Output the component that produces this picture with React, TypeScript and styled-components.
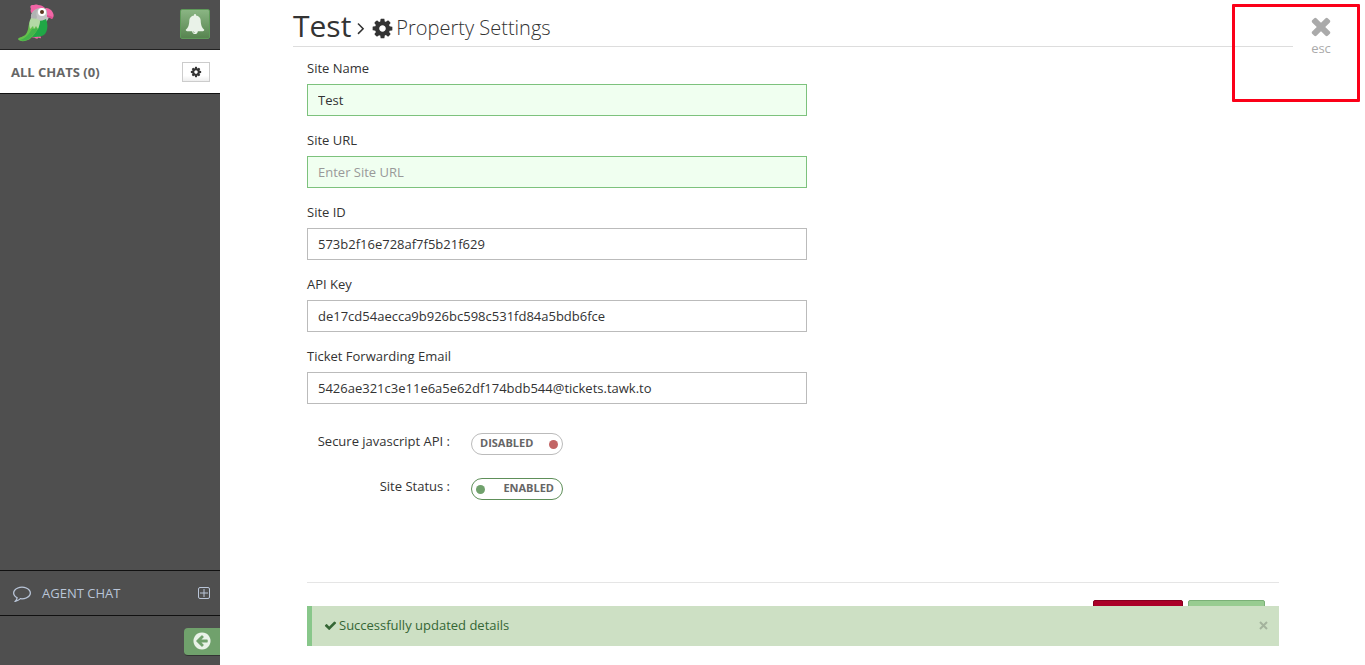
import React, { useState } from "react";
import styled, { createGlobalStyle } from "styled-components";

const GlobalStyle = createGlobalStyle`
  *, *::before, *::after { box-sizing: border-box; }
  body {
    margin: 0;
    background: #fff;
    color: #333;
    font-family: "Open Sans", "Noto Sans", sans-serif;
    font-size: 13px;
    line-height: 20px;
  }
  button, input { font: inherit; color: inherit; }
  button { cursor: pointer; }
`;

const paths = {
  bell: "M912 1696q0-16-16-16-59 0-101.5-42.5t-42.5-101.5q0-16-16-16t-16 16q0 73 51.5 124.5t124.5 51.5q16 0 16-16zm816-288q0 52-38 90t-90 38h-448q0 106-75 181t-181 75-181-75-75-181h-448q-52 0-90-38t-38-90q50-42 91-88t85-119.5 74.5-158.5 50-206 19.5-260q0-152 117-282.5t307-158.5q-8-19-8-39 0-40 28-68t68-28 68 28 28 68q0 20-8 39 190 28 307 158.5t117 282.5q0 139 19.5 260t50 206 74.5 158.5 85 119.5 91 88z",
  cog: "M1152 896q0-106-75-181t-181-75-181 75-75 181 75 181 181 75 181-75 75-181zm512-109v222q0 12-8 23t-20 13l-185 28q-19 54-39 91 35 50 107 138 10 12 10 25t-9 23q-27 37-99 108t-94 71q-12 0-26-9l-138-108q-44 23-91 38-16 136-29 186-7 28-36 28h-222q-14 0-24.5-8.5t-11.5-21.5l-28-184q-49-16-90-37l-141 107q-10 9-25 9-14 0-25-11-126-114-165-168-7-10-7-23 0-12 8-23 15-21 51-66.5t54-70.5q-27-50-41-99l-183-27q-13-2-21-12.5t-8-23.5v-222q0-12 8-23t19-13l186-28q14-46 39-92-40-57-107-138-10-12-10-24 0-10 9-23 26-36 98.5-107.5t94.5-71.5q13 0 26 10l138 107q44-23 91-38 16-136 29-186 7-28 36-28h222q14 0 24.5 8.5t11.5 21.5l28 184q49 16 90 37l142-107q9-9 24-9 13 0 25 10 129 119 165 170 7 8 7 22 0 12-8 23-15 21-51 66.5t-54 70.5q26 50 41 98l183 28q13 2 21 12.5t8 23.5z",
  times: "M1490 1322q0 40-28 68l-136 136q-28 28-68 28t-68-28l-294-294-294 294q-28 28-68 28t-68-28l-136-136q-28-28-28-68t28-68l294-294-294-294q-28-28-28-68t28-68l136-136q28-28 68-28t68 28l294 294 294-294q28-28 68-28t68 28l136 136q28 28 28 68t-28 68l-294 294 294 294q28 28 28 68z",
  check: "M1671 566q0 40-28 68l-724 724-136 136q-28 28-68 28t-68-28l-136-136-362-362q-28-28-28-68t28-68l136-136q28-28 68-28t68 28l294 295 656-657q28-28 68-28t68 28l136 136q28 28 28 68z",
  comment: "M896 384q-204 0-381.5 69.5t-282 187.5-104.5 255q0 112 71.5 213.5t201.5 175.5l87 50-27 96q-24 91-70 172 152-63 275-171l43-38 57 6q69 8 130 8 204 0 381.5-69.5t282-187.5 104.5-255-104.5-255-282-187.5-381.5-69.5zm896 512q0 174-120 321.5t-326 233-450 85.5q-70 0-145-8-198 175-460 242-49 14-114 22h-5q-15 0-27-10.5t-16-27.5v-1q-3-4-.5-12t2-10 4.5-9.5l6-9 7-8.5 8-9q7-8 31-34.5t34.5-38 31-39.5 32.5-51 27-59 26-76q-157-89-247.5-220t-90.5-281q0-174 120-321.5t326-233 450-85.5 450 85.5 326 233 120 321.5z",
  angle: "M1171 960q0 13-10 23l-466 466q-10 10-23 10t-23-10l-50-50q-10-10-10-23t10-23l393-393-393-393q-10-10-10-23t10-23l50-50q10-10 23-10t23 10l466 466q10 10 10 23z",
  arrow: "M1408 960v-128q0-26-19-45t-45-19h-502l189-189q19-19 19-45t-19-45l-91-91q-18-18-45-18t-45 18l-362 362-91 91q-18 18-18 45t18 45l91 91 362 362q18 18 45 18t45-18l91-91q18-18 18-45t-18-45l-189-189h502q26 0 45-19t19-45zm256-64q0 209-103 385.5t-279.5 279.5-385.5 103-385.5-103-279.5-279.5-103-385.5 103-385.5 279.5-279.5 385.5-103 385.5 103 279.5 279.5 103 385.5z",
};

const Glyph = styled.svg`
  display: block;
  flex: none;
  fill: currentColor;
`;

function Icon({ name, size }: { name: keyof typeof paths; size: number }) {
  return (
    <Glyph width={size} height={size} viewBox="0 0 1792 1792" aria-hidden="true">
      <path d={paths[name]} />
    </Glyph>
  );
}

function ParrotLogo() {
  return (
    <svg width="38" height="40" viewBox="0 0 38 40" role="img" aria-label="Parrot">
      <path d="M15 32c2-1 5-2 7-1 0 1 1 2 1 3-1 1-2-1-3 0 0 1-2 1-3 0-1-1-2 0-3-1z" fill="#f266a6" />
      <path d="M13 9c0-2-1-3 0-4-1-2-1-4 2-4 2 0 3-1 5 0 3 0 5 1 7 3z" fill="#f266a6" />
      <path d="M13 15c-1-7 4-11 11-11 5 0 7 3 7 7 0 4-2 6-4 8l-12 3z" fill="#c3c4c4" />
      <path d="M13 14c0-6 4-9 9-10-4 2-4 6-3 9-1 3-2 5-5 6z" fill="#b0b3b3" />
      <path d="M27 4c4 0 7 2 8 5 1 2 1 4-1 6-2-1-3-2-5-2 0-2 1-6-2-9z" fill="#f266a6" />
      <path d="M29 11c2 1 4 1 6 2l-1 2c-2-1-3-2-5-2z" fill="#dd4f91" />
      <path d="M20 17c3 0 6-1 8-2 2 5 2 11-1 15-3 3-8 3-13 3 1-5 4-10 6-16z" fill="#20a746" />
      <path d="M12 17c-2 4-1 9-4 13-2 3-7 3-8 5 1 3 9 3 13-1 3-3 5-6 7-9l2-8z" fill="#65bf4c" />
      <path d="M20 24c-2 5-6 8-9 11-3 2-7 2-9 1 6-2 9-6 12-11z" fill="#43b34a" />
      <path d="M13 14c3 1 7 0 9 3 0 3-1 5-2 8l-2-3-2 3-1-3-3 3c-1-4-1-8 1-11z" fill="#b4d9a5" />
      <circle cx="24" cy="8" r="4" fill="#fff" />
      <circle cx="24" cy="8" r="2" fill="#59361f" />
    </svg>
  );
}

const Page = styled.div`
  display: flex;
  min-height: 100vh;
`;

const Sidebar = styled.aside`
  display: flex;
  flex: 0 0 220px;
  flex-direction: column;
  background: #4f4f4f;
`;

const SidebarTop = styled.header`
  display: flex;
  align-items: center;
  justify-content: space-between;
  height: 50px;
  padding: 0 10px 2px 18px;
  border-bottom: 1px solid #222;
`;

const BellButton = styled.button`
  display: grid;
  place-items: center;
  width: 30px;
  height: 30px;
  padding: 0;
  border: 1px solid #5e9a59;
  border-radius: 2px;
  background: linear-gradient(#8ab583, #578450);
  color: #e9f2e8;
`;

const ChatsBar = styled.div`
  display: flex;
  align-items: center;
  justify-content: space-between;
  height: 44px;
  padding: 0 10px 0 11px;
  border-bottom: 1px solid #111;
  background: #fff;
`;

const ChatsTitle = styled.h2`
  margin: 0;
  color: #666;
  font-size: 13px;
  font-weight: 700;
`;

const CogButton = styled.button`
  display: grid;
  place-items: center;
  width: 28px;
  height: 20px;
  padding: 0;
  border: 1px solid #ccc;
  background: linear-gradient(#fff 70%, #eee);
  color: #333;
`;

const ChatList = styled.div`
  flex: 1;
`;

const AgentChat = styled.button`
  display: flex;
  align-items: center;
  gap: 11px;
  height: 46px;
  padding: 0 10px 0 13px;
  border: solid #111;
  border-width: 1px 0;
  background: none;
  color: #b9c5d8;
  text-align: left;
`;

const AgentLabel = styled.span`
  flex: 1;
`;

const SidebarBottom = styled.footer`
  display: flex;
  align-items: center;
  justify-content: flex-end;
  height: 49px;
  padding-top: 2px;
`;

const CollapseButton = styled.button`
  display: flex;
  align-items: center;
  width: 36px;
  height: 28px;
  padding: 0 8px;
  border: 0;
  border-bottom: 1px solid #333;
  border-radius: 4px 0 0 4px;
  background: #70a16c;
  color: #e9f2e8;
`;

const Main = styled.main`
  position: relative;
  display: flex;
  flex: 1;
  flex-direction: column;
  min-width: 0;
  padding: 0 72px 0 73px;
`;

const TitleBar = styled.h1`
  display: flex;
  align-items: center;
  height: 47px;
  margin: 0;
  padding-top: 10px;
  border-bottom: 1px solid #ddd;
  font-weight: 400;
`;

const SiteTitle = styled.span`
  padding-bottom: 4px;
  font-size: 30px;
  line-height: 36px;
`;

const SectionTitle = styled.span`
  display: flex;
  align-items: center;
  gap: 2px;
  font-size: 20px;
  font-weight: 300;
  line-height: 36px;
`;

const Form = styled.form`
  display: flex;
  flex: 1;
  flex-direction: column;
  padding: 11px 14px 0;
`;

const Field = styled.div`
  display: flex;
  flex-direction: column;
  gap: 6px;
  width: 500px;
  max-width: 100%;
  margin-bottom: 14px;
`;

const TextInput = styled.input<{ $valid?: boolean }>`
  height: 32px;
  padding: 0 10px;
  border: 1px solid ${(p) => (p.$valid ? "#7dc27d" : "#bbb")};
  border-radius: 0;
  background: ${(p) => (p.$valid ? "#f0fff0" : "#fff")};
  outline: 0;
  &::placeholder { color: #999; opacity: 1; }
`;

const Switches = styled.div`
  display: flex;
  flex-direction: column;
  gap: 23px;
  padding-top: 13px;
`;

const SwitchRow = styled.div`
  display: flex;
  gap: 21px;
  height: 22px;
`;

const SwitchLabel = styled.label`
  width: 143px;
  text-align: right;
`;

const SwitchBody = styled.span<{ $on: boolean }>`
  position: relative;
  display: flex;
  flex-direction: ${(p) => (p.$on ? "row-reverse" : "row")};
  align-items: center;
  justify-content: space-between;
  width: 92px;
  height: 22px;
  margin-top: 2px;
  padding: ${(p) => (p.$on ? "0 8px 0 4px" : "0 4px 0 8px")};
  border: 1px solid ${(p) => (p.$on ? "#5e8f59" : "#bbb")};
  border-radius: 11px;
  color: #666;
  font-size: 11px;
  font-weight: 700;
  line-height: 18px;
`;

const SwitchText = styled.span`
  padding-bottom: 2px;
`;

const SwitchInput = styled.input`
  position: absolute;
  inset: 0;
  width: 100%;
  height: 100%;
  margin: 0;
  opacity: 0;
  cursor: pointer;
`;

const Dot = styled.span<{ $on: boolean }>`
  width: 9px;
  height: 9px;
  border-radius: 50%;
  background: ${(p) => (p.$on ? "#70a16c" : "#c26565")};
`;

const Actions = styled.div`
  display: flex;
  justify-content: flex-end;
  gap: 5px;
  height: 83px;
  margin-top: auto;
  padding: 17px 14px 0 0;
  border-top: 1px solid #e5e5e5;
`;

const ActionButton = styled.button<{ $danger?: boolean }>`
  width: ${(p) => (p.$danger ? "90px" : "77px")};
  height: 32px;
  border: 1px solid ${(p) => (p.$danger ? "#850020" : "#7bb077")};
  border-radius: 2px;
  background: ${(p) => (p.$danger ? "#ab0028" : "#98cc91")};
`;

/* The notice floats over the form's action buttons. */
const Notice = styled.div`
  position: absolute;
  right: 86px;
  bottom: 19px;
  left: 87px;
  display: flex;
  align-items: center;
  gap: 2px;
  height: 40px;
  padding: 0 10px 2px 12px;
  border-left: 5px solid #88c78a;
  background: #cde0c4;
  color: #356635;
`;

const NoticeText = styled.span`
  flex: 1;
`;

const DismissButton = styled.button`
  padding: 0;
  border: 0;
  background: none;
  color: #a4b39d;
  line-height: 0;
`;

const CloseButton = styled.button`
  position: absolute;
  top: 12px;
  right: 30px;
  display: flex;
  flex-direction: column;
  align-items: center;
  padding: 0;
  border: 0;
  background: none;
  color: #aaa;
  line-height: 16px;
`;

const Highlight = styled.div`
  position: absolute;
  top: 4px;
  right: 5px;
  width: 128px;
  height: 98px;
  border: 3px solid #fb0018;
  border-radius: 1px;
  pointer-events: none;
`;

const fields = [
  { id: "site-name", label: "Site Name", value: "Test", valid: true },
  { id: "site-url", label: "Site URL", value: "", placeholder: "Enter Site URL", valid: true },
  { id: "site-id", label: "Site ID", value: "573b2f16e728af7f5b21f629" },
  { id: "api-key", label: "API Key", value: "de17cd54aecca9b926bc598c531fd84a5bdb6fce" },
  { id: "email", label: "Ticket Forwarding Email", value: "5426ae321c3e11e6a5e62df174bdb544@tickets.tawk.to" },
];

function Switch({ id, label, initial }: { id: string; label: string; initial: boolean }) {
  const [on, setOn] = useState(initial);
  return (
    <SwitchRow>
      <SwitchLabel htmlFor={id}>{label}</SwitchLabel>
      <SwitchBody $on={on}>
        <SwitchText>{on ? "ENABLED" : "DISABLED"}</SwitchText>
        <Dot $on={on} />
        <SwitchInput id={id} type="checkbox" checked={on} onChange={() => setOn(!on)} />
      </SwitchBody>
    </SwitchRow>
  );
}

export default function App() {
  return (
    <Page>
      <GlobalStyle />
      <Sidebar>
        <SidebarTop>
          <ParrotLogo />
          <BellButton aria-label="Notifications"><Icon name="bell" size={20} /></BellButton>
        </SidebarTop>
        <ChatsBar>
          <ChatsTitle>ALL CHATS (0)</ChatsTitle>
          <CogButton aria-label="Chat settings"><Icon name="cog" size={12} /></CogButton>
        </ChatsBar>
        <ChatList />
        <AgentChat>
          <Icon name="comment" size={18} />
          <AgentLabel>AGENT CHAT</AgentLabel>
          <svg width="12" height="12" viewBox="0 0 12 12" fill="none" stroke="currentColor" aria-hidden="true">
            <rect x=".5" y=".5" width="11" height="11" rx="1.500" />
            <path d="M6 2v8M2 6h8" />
          </svg>
        </AgentChat>
        <SidebarBottom>
          <CollapseButton aria-label="Collapse sidebar"><Icon name="arrow" size={20} /></CollapseButton>
        </SidebarBottom>
      </Sidebar>
      <Main>
        <TitleBar>
          <SiteTitle>Test</SiteTitle>
          <Icon name="angle" size={20} />
          <SectionTitle>
            <Icon name="cog" size={23} />
            Property Settings
          </SectionTitle>
        </TitleBar>
        <Form onSubmit={(e) => e.preventDefault()}>
          {fields.map((f) => (
            <Field key={f.id}>
              <label htmlFor={f.id}>{f.label}</label>
              <TextInput id={f.id} type="text" defaultValue={f.value} placeholder={f.placeholder} $valid={f.valid} />
            </Field>
          ))}
          <Switches>
            <Switch id="secure-api" label="Secure javascript API :" initial={false} />
            <Switch id="site-status" label="Site Status :" initial={true} />
          </Switches>
          <Actions>
            <ActionButton type="button" $danger aria-label="Delete site" />
            <ActionButton type="submit" aria-label="Save" />
          </Actions>
        </Form>
        <Notice role="status">
          <Icon name="check" size={13} />
          <NoticeText>Successfully updated details</NoticeText>
          <DismissButton aria-label="Dismiss">
            <svg width="11" height="11" viewBox="0 0 11 11" fill="none" stroke="currentColor" strokeWidth="2" aria-hidden="true">
              <path d="M2 2l7 7M9 2l-7 7" />
            </svg>
          </DismissButton>
        </Notice>
        <CloseButton>
          <Icon name="times" size={28} />
          esc
        </CloseButton>
        <Highlight />
      </Main>
    </Page>
  );
}
